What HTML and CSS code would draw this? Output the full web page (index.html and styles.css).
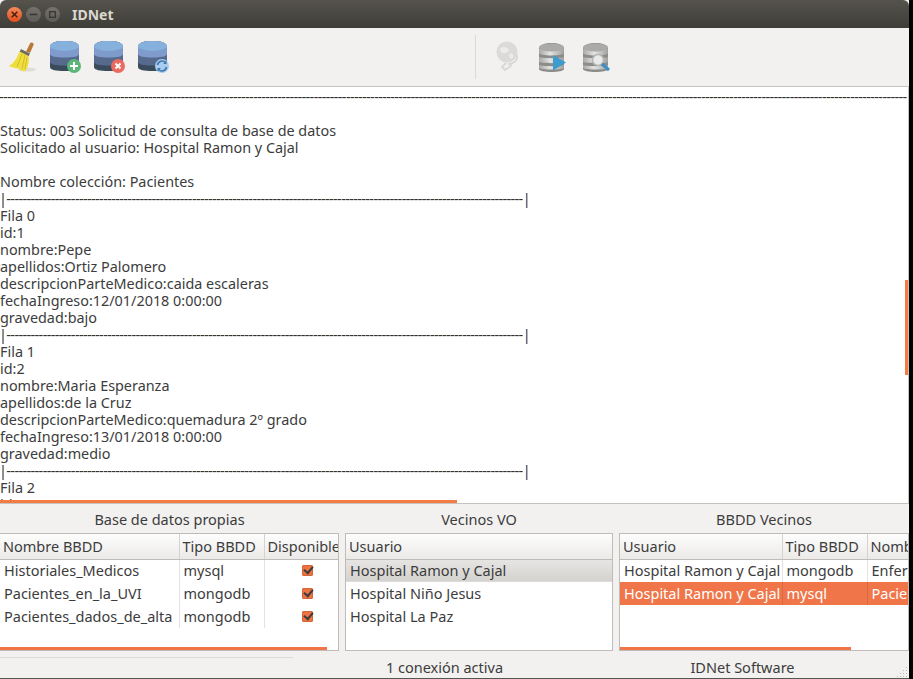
FILE: index.html
```html
<!DOCTYPE html>
<html lang="es">
<head>
    <meta charset="UTF-8">
    <meta name="viewport" content="width=device-width, initial-scale=1.0">
    <title>IDNet</title>
    <link rel="stylesheet" href="styles.css">
</head>
<body>
    <div class="window">
        <header class="titlebar">
            <div class="win-buttons">
                <span class="win-btn close">
                    <svg viewBox="0 0 16 16"><path d="M5 5l6 6M11 5l-6 6" stroke="#4a1c0a" stroke-width="1.6" fill="none"/></svg>
                </span>
                <span class="win-btn">
                    <svg viewBox="0 0 16 16"><path d="M4 8h8" stroke="#35332e" stroke-width="1.6" fill="none"/></svg>
                </span>
                <span class="win-btn">
                    <svg viewBox="0 0 16 16"><rect x="5" y="5" width="6" height="6" stroke="#35332e" stroke-width="1.3" fill="none"/></svg>
                </span>
            </div>
            <span class="win-title">IDNet</span>
        </header>

        <div class="toolbar">
            <div class="tool-group">
                <!-- escoba -->
                <svg class="tool" viewBox="0 0 32 32">
                    <ellipse cx="22" cy="28.500" rx="9" ry="2" fill="#dfdcd8"/>
                    <path d="M21 10.500l4-8c1-2 4.500-.5 3.500 1.500l-3.500 8z" fill="#b9783a"/>
                    <path d="M16 8l9 4.500-1.500 3-9-4.500z" fill="#6e6e60"/>
                    <path d="M14.500 10.500l9 4.500c1 5 0 10-3 15-3 .5-5-.5-7-2.500-3 0-7-1-9.500-2.500 5-3 8-8 10.500-14.500z" fill="#f0de3e"/>
                    <path d="M17 13l-5 13M20 14l-3 14M22 16l-2 12" stroke="#cdb222" stroke-width=".8" fill="none"/>
                </svg>
                <!-- base de datos + -->
                <svg class="tool" viewBox="0 0 32 32">
                    <use href="#db"/>
                    <circle cx="25" cy="25" r="7" fill="#5cb67a"/>
                    <path d="M25 21v8M21 25h8" stroke="#fff" stroke-width="2"/>
                </svg>
                <!-- base de datos x -->
                <svg class="tool" viewBox="0 0 32 32">
                    <use href="#db"/>
                    <circle cx="25" cy="25" r="7" fill="#ea6a60"/>
                    <path d="M22.500 22.500l5 5M27.500 22.500l-5 5" stroke="#fff" stroke-width="2"/>
                </svg>
                <!-- base de datos refrescar -->
                <svg class="tool" viewBox="0 0 32 32">
                    <use href="#db"/>
                    <circle cx="25" cy="25" r="7" fill="#a9cdee"/>
                    <path d="M20.500 24a4.700 4.700 0 0 1 8-2.500M29.500 26a4.700 4.700 0 0 1-8 2.500" stroke="#3f76b0" stroke-width="1.600" fill="none"/>
                    <path d="M29.500 19.500v3.500h-3.500zM20.500 30.500v-3.500h3.500z" fill="#3f76b0"/>
                </svg>
            </div>
            <div class="tool-sep"></div>
            <div class="tool-group">
                <!-- globo desactivado -->
                <svg class="tool" viewBox="0 0 32 32">
                    <circle cx="14" cy="11" r="10.500" fill="#dbdad8"/>
                    <path d="M7 8c3-3 6-2 8 0s-1 4-3 4-4 1-5-4zM16 13c3-1 5 0 4 3s-4 2-4-3z" fill="#eceBe9"/>
                    <path d="M24 14c1 5-3 9-9 9M13 22l-4 4 3 3 7-5" stroke="#d8d7d5" stroke-width="1.800" fill="none"/>
                </svg>
                <!-- base de datos play -->
                <svg class="tool" viewBox="0 0 32 32">
                    <use href="#dbgrey"/>
                    <path d="M16 14l13 7.500-13 8z" fill="#3c9ccf"/>
                </svg>
                <!-- base de datos lupa -->
                <svg class="tool" viewBox="0 0 32 32">
                    <use href="#dbgrey"/>
                    <circle cx="17" cy="19" r="5.500" fill="#e9eaea" stroke="#b4b4b2" stroke-width="1.500"/>
                    <path d="M21 23l7 6" stroke="#3c8fc4" stroke-width="3"/>
                </svg>
            </div>
        </div>

        <main class="console">
            <pre class="console-text"><span class="rule">---------------------------------------------------------------------------------------------------------------------------------------------------------------------------------------------------------------------------------</span>

Status: 003 Solicitud de consulta de base de datos
Solicitado al usuario: Hospital Ramon y Cajal

Nombre colección: Pacientes
<span class="rule">|--------------------------------------------------------------------------------------------------------------------------------|</span>
Fila 0
id:1
nombre:Pepe
apellidos:Ortiz Palomero
descripcionParteMedico:caida escaleras
fechaIngreso:12/01/2018 0:00:00
gravedad:bajo
<span class="rule">|--------------------------------------------------------------------------------------------------------------------------------|</span>
Fila 1
id:2
nombre:Maria Esperanza
apellidos:de la Cruz
descripcionParteMedico:quemadura 2º grado
fechaIngreso:13/01/2018 0:00:00
gravedad:medio
<span class="rule">|--------------------------------------------------------------------------------------------------------------------------------|</span>
Fila 2
id:3</pre>
            <div class="scroll-v"></div>
            <div class="scroll-h"></div>
        </main>

        <section class="panels">
            <div class="panel panel-own">
                <h2 class="panel-title">Base de datos propias</h2>
                <div class="table-box">
                    <table class="table">
                        <colgroup><col class="c-own-name"><col class="c-type"><col class="c-avail"></colgroup>
                        <thead><tr><th>Nombre BBDD</th><th>Tipo BBDD</th><th>Disponible</th></tr></thead>
                        <tbody>
                            <tr><td>Historiales_Medicos</td><td>mysql</td><td class="check-cell"><span class="check"></span></td></tr>
                            <tr><td>Pacientes_en_la_UVI</td><td>mongodb</td><td class="check-cell"><span class="check"></span></td></tr>
                            <tr><td>Pacientes_dados_de_alta</td><td>mongodb</td><td class="check-cell"><span class="check"></span></td></tr>
                        </tbody>
                    </table>
                    <div class="scroll-t scroll-own"></div>
                </div>
            </div>
            <div class="panel panel-vo">
                <h2 class="panel-title">Vecinos VO</h2>
                <div class="table-box">
                    <table class="table">
                        <thead><tr><th>Usuario</th></tr></thead>
                        <tbody>
                            <tr class="row-current"><td>Hospital Ramon y Cajal</td></tr>
                            <tr><td>Hospital Niño Jesus</td></tr>
                            <tr><td>Hospital La Paz</td></tr>
                        </tbody>
                    </table>
                </div>
            </div>
            <div class="panel panel-nb">
                <h2 class="panel-title">BBDD Vecinos</h2>
                <div class="table-box">
                    <table class="table">
                        <colgroup><col class="c-user"><col class="c-type"><col class="c-name"></colgroup>
                        <thead><tr><th>Usuario</th><th>Tipo BBDD</th><th>Nombre BBDD</th></tr></thead>
                        <tbody>
                            <tr><td>Hospital Ramon y Cajal</td><td>mongodb</td><td>Enfermos</td></tr>
                            <tr class="row-selected"><td>Hospital Ramon y Cajal</td><td>mysql</td><td>Pacientes</td></tr>
                        </tbody>
                    </table>
                    <div class="scroll-t scroll-nb"></div>
                </div>
            </div>
        </section>

        <footer class="statusbar">
            <div class="status-left"><div class="status-track"></div></div>
            <div class="status-mid">1 conexión activa</div>
            <div class="status-right">IDNet Software</div>
            <svg class="grip" width="11" height="11" viewBox="0 0 11 11" fill="#b9b6b1">
                <rect x="9" y="0" width="1" height="1"/>
                <rect x="6" y="3" width="1" height="1"/><rect x="9" y="3" width="1" height="1"/>
                <rect x="3" y="6" width="1" height="1"/><rect x="6" y="6" width="1" height="1"/><rect x="9" y="6" width="1" height="1"/>
                <rect x="0" y="9" width="1" height="1"/><rect x="3" y="9" width="1" height="1"/><rect x="6" y="9" width="1" height="1"/><rect x="9" y="9" width="1" height="1"/>
            </svg>
        </footer>
    </div>
    <div class="desktop-edge"></div>

    <svg class="defs" width="0" height="0">
        <defs>
            <linearGradient id="silver" x1="0" y1="0" x2="1" y2="0">
                <stop offset="0" stop-color="#a8a8a6"/>
                <stop offset="0.45" stop-color="#e4e4e2"/>
                <stop offset="1" stop-color="#a0a09e"/>
            </linearGradient>
            <g id="db">
                <path d="M1 6c0-4 6-6 14.500-6S30 2 30 6v20c0 3-6 4-14.500 4S1 29 1 26z" fill="#3a4c5c"/>
                <path d="M1 6c0-4 6-6 14.500-6S30 2 30 6v15c0 2.500-6 3.500-14.500 3.500S1 23.500 1 21z" fill="#566a8e"/>
                <path d="M1 6c0-4 6-6 14.500-6S30 2 30 6v7c0 2.500-6 3.500-14.500 3.500S1 15.500 1 13z" fill="#7f9bcb"/>
                <ellipse cx="15.500" cy="5" rx="14.500" ry="5" fill="#86b1dd"/>
            </g>
            <g id="dbgrey">
                <path d="M2 7c0-3 6-5 12.500-5S27 4 27 7v21c0 2-6 3-12.500 3S2 30 2 28z" fill="#8c8c8a"/>
                <path d="M2 8h25v4c0 1.500-6 2.500-12.500 2.500S2 13.500 2 12z" fill="url(#silver)"/>
                <path d="M2 16c3 1.500 22 1.500 25 0v5c-3 1.500-22 1.500-25 0z" fill="url(#silver)"/>
                <path d="M2 24c3 1.500 22 1.500 25 0v3c-3 2-22 2-25 0z" fill="url(#silver)"/>
                <ellipse cx="14.500" cy="6.500" rx="12.500" ry="4" fill="#aaaaa8"/>
            </g>
        </defs>
    </svg>
</body>
</html>
```

FILE: styles.css
```css
* {
    box-sizing: border-box;
}

html, body {
    margin: 0;
    height: 100%;
    background: #000;
    overflow: hidden;
}

body {
    display: flex;
    font-family: "Noto Sans", "Open Sans", sans-serif;
    font-size: 14.5px;
    color: #3c3c3c;
}

.defs {
    position: absolute;
}

.window {
    width: 909px;
    height: 679px;
    display: flex;
    flex-direction: column;
    background: #f2f1f0;
    border-bottom: 1px solid #555;
}

.desktop-edge {
    flex: 1;
    background: #000;
}

/* barra de titulo */
.titlebar {
    height: 28px;
    flex: none;
    display: flex;
    align-items: center;
    padding-left: 7px;
    background: linear-gradient(#55534c, #3e3d38);
    border-radius: 6px 6px 0 0;
}

.win-buttons {
    display: flex;
    gap: 4px;
}

.win-btn {
    width: 15px;
    height: 15px;
    border-radius: 50%;
    background: linear-gradient(#74726b, #5d5b55);
    display: flex;
}

.win-btn.close {
    background: linear-gradient(#f58a5a, #e04f1f);
}

.win-title {
    margin-left: 12px;
    font-size: 14px;
    font-weight: 700;
    color: #dcd8cf;
}

/* herramientas */
.toolbar {
    height: 59px;
    flex: none;
    display: flex;
    align-items: center;
    padding-left: 5px;
    border-bottom: 1px solid #c6c3bf;
}

.tool-group {
    display: flex;
    gap: 12px;
}

.tool {
    width: 32px;
    height: 32px;
    overflow: visible;
}

.tool-sep {
    width: 1px;
    height: 44px;
    margin: 0 17px 0 306px;
    background: #dcdad7;
}

/* salida de texto */
.console {
    position: relative;
    height: 417px;
    flex: none;
    overflow: hidden;
    background: #fff;
    border-bottom: 1px solid #c6c3bf;
    border-right: 1px solid #c6c3bf;
}

.console-text {
    margin: 0;
    padding-top: 1px;
    font: inherit;
    font-size: 14.4px;
    line-height: 17px;
    color: #3c3c3c;
}

.rule {
    margin-left: -1px;
    letter-spacing: -0.6px;
    color: #33332f;
}

.scroll-v {
    position: absolute;
    right: 0;
    top: 193px;
    width: 3px;
    height: 95px;
    background: #f37b45;
}

.scroll-h {
    position: absolute;
    left: 0;
    bottom: 0;
    width: 457px;
    height: 3px;
    background: #f37b45;
}

/* paneles */
.panels {
    height: 153px;
    flex: none;
    display: grid;
    grid-template-columns: 339px 268px 1fr;
    gap: 6px;
}

.panel {
    min-width: 0;
    display: flex;
    flex-direction: column;
}

.panel-title {
    margin: 0;
    height: 29px;
    flex: none;
    display: flex;
    align-items: center;
    justify-content: center;
    font-size: 14.5px;
    font-weight: 400;
}

.table-box {
    position: relative;
    height: 118px;
    flex: none;
    overflow: hidden;
    background: #fff;
    border: 1px solid #bfbcb7;
}

.panel-own .table-box {
    border-left: none;
}

.table {
    width: 100%;
    table-layout: fixed;
    border-collapse: collapse;
    white-space: nowrap;
}

.panel-nb .table {
    width: 400px;
}

.c-own-name {
    width: 179px;
}

.c-type {
    width: 85px;
}

.c-user {
    width: 162px;
}

.table th {
    height: 25px;
    padding: 0 3px;
    overflow: hidden;
    font-weight: 400;
    text-align: left;
    background: linear-gradient(#fdfdfd, #ebeae8);
    border-right: 1px solid #d5d3d0;
    border-bottom: 1px solid #bfbcb7;
}

.table td {
    height: 23px;
    padding: 0 4px 2px;
    overflow: hidden;
    border-right: 1px solid #e4e3e1;
}

.table td:last-child,
.table th:last-child {
    border-right: none;
}

.table td.check-cell {
    padding: 0 0 0 12px;
}

.check {
    display: block;
    position: relative;
    width: 11px;
    height: 11px;
    margin: 0 auto;
    border-radius: 2px;
    background: #ee7240;
    box-shadow: inset 0 0 0 1px #d4653a;
}

.check::after {
    content: "";
    position: absolute;
    left: 2px;
    top: 1px;
    width: 7px;
    height: 4px;
    border-left: 2px solid #3c3c3c;
    border-bottom: 2px solid #3c3c3c;
    transform: rotate(-50deg);
    transform-origin: center;
}

.row-current td {
    background: linear-gradient(#e6e5e3, #d4d2cf);
}

.row-selected td {
    color: #fff;
    background: #f0764a;
    border-right-color: #d96a40;
}

.scroll-t {
    position: absolute;
    left: 0;
    bottom: 0;
    height: 3px;
    background: #f0764a;
}

.scroll-own {
    width: 327px;
}

.scroll-nb {
    width: 231px;
}

/* barra de estado */
.statusbar {
    position: relative;
    flex: 1;
    display: grid;
    grid-template-columns: 293px 303px 1fr;
    align-items: center;
    padding-bottom: 2px;
    font-size: 14.5px;
}

.status-left {
    align-self: start;
}

.status-track {
    height: 1px;
    background: #dcdad7;
}

.status-mid {
    text-align: center;
}

.status-right {
    text-align: center;
    padding-right: 20px;
}

.grip {
    position: absolute;
    right: 1px;
    bottom: 1px;
}
```
